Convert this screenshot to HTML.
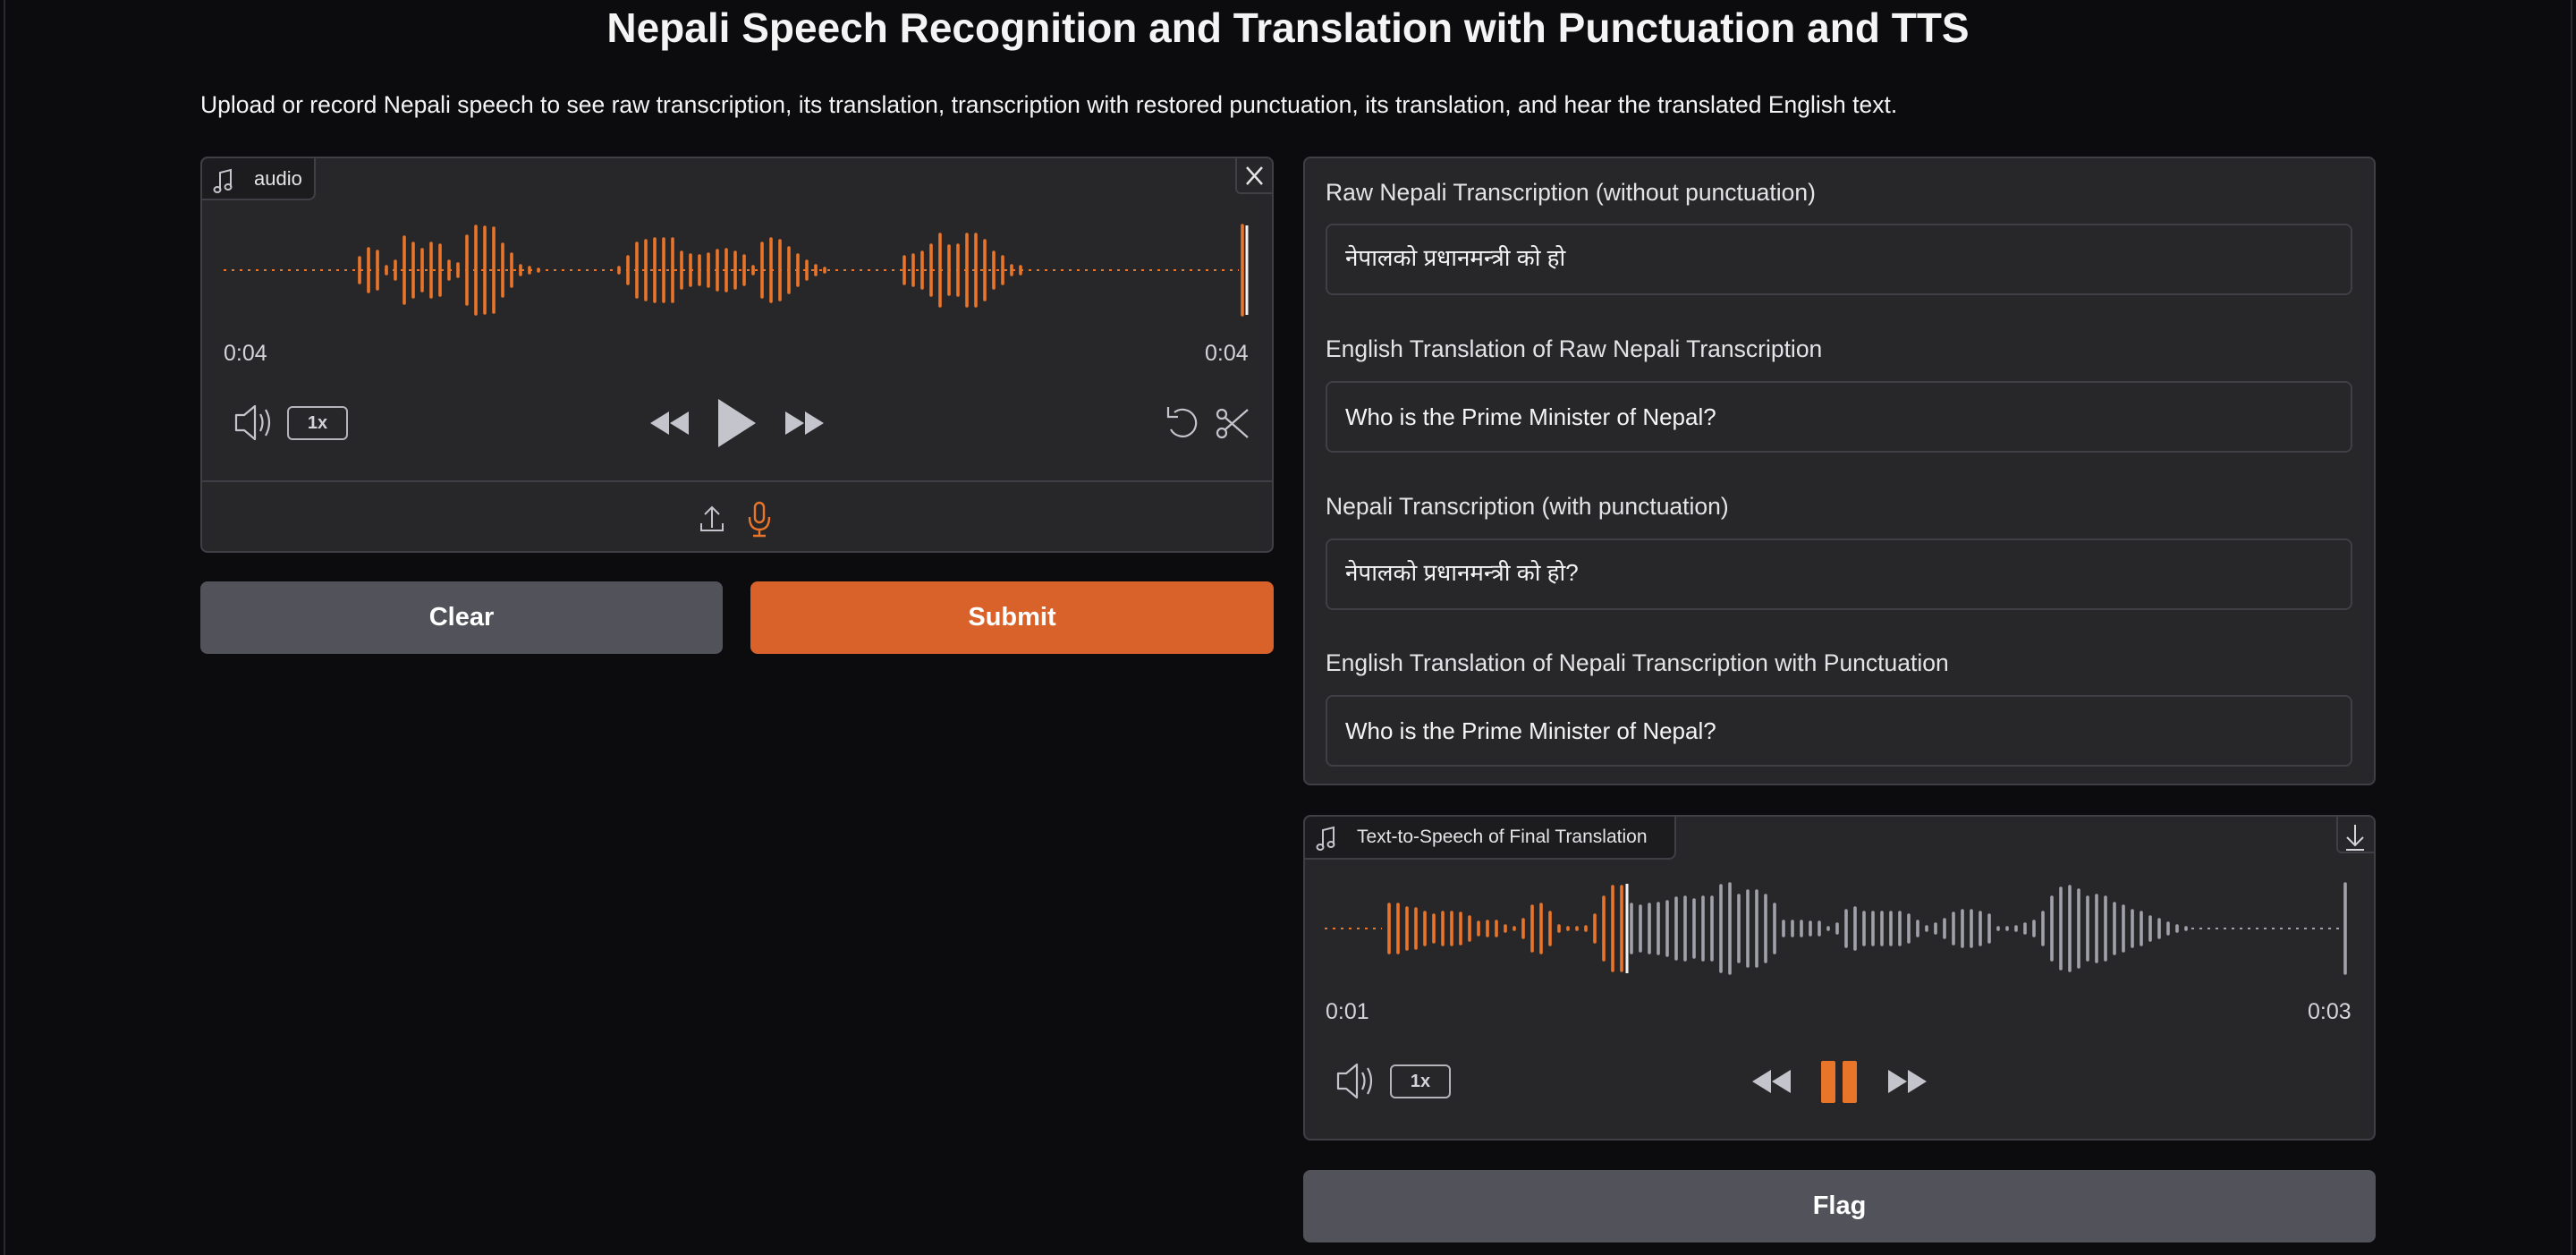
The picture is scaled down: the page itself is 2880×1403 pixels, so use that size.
<!DOCTYPE html>
<html><head><meta charset="utf-8"><style>
*{box-sizing:border-box;margin:0;padding:0}
html,body{width:2880px;height:1403px;overflow:hidden;background:#0c0c0f;font-family:"Liberation Sans","Noto Sans Devanagari","Lohit Devanagari","DejaVu Sans",sans-serif;color:#e4e4e7}
.a{position:absolute}
.title{left:0;width:2880px;top:4px;text-align:center;font-size:46px;font-weight:bold;color:#f4f4f5}
.desc{left:224px;top:102px;font-size:26.5px;color:#f4f4f5;white-space:nowrap}
.panel{background:#27272a;border:2px solid #3f3f46;border-radius:8px}
.tab{background:#1c1c1f;border-right:2px solid #3f3f46;border-bottom:2px solid #3f3f46;border-radius:8px 0 8px 0;font-size:22px;color:#e4e4e7;display:flex;align-items:center;padding-left:58px}
.btn{border-radius:8px;font-size:29px;font-weight:bold;color:#fff;display:flex;align-items:center;justify-content:center}
.lbl{left:1482px;font-size:26.5px;color:#e4e4e7}
.tb{left:1482px;width:1148px;height:80px;border:2px solid #3f3f46;border-radius:8px;background:#27272a;font-size:26px;color:#f4f4f5;padding-left:20px;display:flex;align-items:center}
.time{font-size:25px;color:#d4d4d8}
.sp{border:2px solid #b4b4bb;border-radius:6px;font-size:20px;color:#d4d4d8;display:flex;align-items:center;justify-content:center;font-weight:bold}
</style></head><body>
<div class="a" style="left:4px;top:0;width:2px;height:1403px;background:#2a2a2e"></div>
<div class="a" style="left:2874px;top:0;width:2px;height:1403px;background:#2a2a2e"></div>
<div class="a title">Nepali Speech Recognition and Translation with Punctuation and TTS</div>
<div class="a desc">Upload or record Nepali speech to see raw transcription, its translation, transcription with restored punctuation, its translation, and hear the translated English text.</div>

<div class="a panel" style="left:224px;top:175px;width:1200px;height:443px"></div>
<div class="a tab" style="left:226px;top:177px;width:127px;height:47px">audio</div>
<div class="a" style="left:1381px;top:177px;width:41px;height:40px;border-left:2px solid #3f3f46;border-bottom:2px solid #3f3f46;border-radius:0 6px 0 6px"></div>
<div class="a" style="left:226px;top:537px;width:1196px;height:2px;background:#3f3f46"></div>
<div class="a time" style="left:250px;top:381px">0:04</div>
<div class="a time" style="left:1347px;top:381px">0:04</div>
<div class="a sp" style="left:321px;top:454px;width:68px;height:38px">1x</div>

<div class="a btn" style="left:224px;top:650px;width:584px;height:81px;background:#52525b">Clear</div>
<div class="a btn" style="left:839px;top:650px;width:585px;height:81px;background:#d9622b">Submit</div>

<div class="a panel" style="left:1457px;top:175px;width:1199px;height:703px"></div>
<div class="a lbl" style="top:200px">Raw Nepali Transcription (without punctuation)</div>
<div class="a tb" style="top:250px">नेपालको प्रधानमन्त्री को हो</div>
<div class="a lbl" style="top:375px">English Translation of Raw Nepali Transcription</div>
<div class="a tb" style="top:426px">Who is the Prime Minister of Nepal?</div>
<div class="a lbl" style="top:551px">Nepali Transcription (with punctuation)</div>
<div class="a tb" style="top:602px">नेपालको प्रधानमन्त्री को हो?</div>
<div class="a lbl" style="top:726px">English Translation of Nepali Transcription with Punctuation</div>
<div class="a tb" style="top:777px">Who is the Prime Minister of Nepal?</div>

<div class="a panel" style="left:1457px;top:911px;width:1199px;height:364px"></div>
<div class="a tab" style="left:1459px;top:913px;width:415px;height:48px;font-size:21px">Text-to-Speech of Final Translation</div>
<div class="a" style="left:2612px;top:913px;width:42px;height:41px;border-left:2px solid #3f3f46;border-bottom:2px solid #3f3f46;border-radius:0 6px 0 6px"></div>
<div class="a time" style="left:1482px;top:1117px">0:01</div>
<div class="a time" style="left:2580px;top:1117px">0:03</div>
<div class="a sp" style="left:1554px;top:1190px;width:68px;height:38px">1x</div>

<div class="a btn" style="left:1457px;top:1308px;width:1199px;height:81px;background:#52525b">Flag</div>

<svg class="a" style="left:0;top:0" width="2880" height="1403" viewBox="0 0 2880 1403" fill="none">
<line x1="250" y1="302" x2="1385" y2="302" stroke="#e8752a" stroke-width="2" stroke-dasharray="3 6"/>
<path stroke="#e8752a" stroke-width="3.6" stroke-linecap="round" d="M402 288V316M412 278V326M422 281V323M432 298V306M442 292V312M452 265V339M462 272V332M472 279V325M482 272V332M492 274V330M502 292V312M512 295V309M522 264V340M532 253V351M542 254V350M552 255V349M562 273V331M572 284V320M582 297V307M592 299V305M602 301V303
M692 299V305M702 287V317M712 272V332M722 269V335M732 267V337M742 267V337M752 267V337M762 282V322M772 285V319M782 286V318M792 284V320M802 280V324M812 279V325M822 282V322M832 286V318M842 298V306M852 272V332M862 267V337M872 269V335M882 277V327M892 285V319M902 292V312M912 297V307M922 300V304
M1011 287V317M1021 285V319M1031 282V322M1041 274V330M1051 262V342M1061 275V329M1071 274V330M1081 262V342M1091 262V342M1101 269V335M1111 282V322M1121 287V317M1131 297V307M1141 298V306M1389 252V352"/>
<path stroke="#f4f4f5" stroke-width="3" d="M1394 252V352"/>
<line x1="1481" y1="1038" x2="1545" y2="1038" stroke="#e8752a" stroke-width="2" stroke-dasharray="3 6"/>
<line x1="2450" y1="1038" x2="2615" y2="1038" stroke="#a1a1aa" stroke-width="2" stroke-dasharray="3 6"/>
<path stroke="#e8752a" stroke-width="3.6" stroke-linecap="round" d="M1553 1011V1065M1563 1011V1065M1573 1015V1061M1583 1016V1060M1593 1020V1056M1603 1023V1053M1613 1020V1056M1623 1020V1056M1633 1021V1055M1643 1025V1051M1653 1031V1045M1663 1030V1046M1673 1030V1046M1683 1035V1041M1693 1037V1039M1703 1028V1048M1713 1013V1063M1723 1011V1065M1733 1020V1056M1743 1035V1041M1753 1037V1039M1763 1037V1039M1773 1036V1040M1783 1023V1053M1793 1003V1073M1803 991V1085M1813 991V1085"/>
<path stroke="#f4f4f5" stroke-width="3" d="M1819 988V1088"/>
<path stroke="#a1a1aa" stroke-width="3.6" stroke-linecap="round" d="M1824 1011V1065M1834 1013V1063M1844 1011V1065M1854 1010V1066M1864 1008V1068M1874 1004V1072M1884 1003V1073M1894 1006V1070M1904 1003V1073M1914 1003V1073M1924 990V1086M1934 988V1088M1944 1001V1075M1954 996V1080M1964 996V1080M1974 1001V1075M1984 1011V1065M1994 1030V1046M2004 1030V1046M2014 1030V1046M2024 1031V1045M2034 1031V1045M2044 1037V1039M2054 1033V1043M2064 1018V1058M2074 1015V1061M2084 1020V1056M2094 1020V1056M2104 1020V1056M2114 1020V1056M2124 1020V1056M2134 1023V1053M2144 1030V1046M2154 1036V1040M2164 1033V1043M2174 1028V1048M2184 1021V1055M2194 1018V1058M2204 1018V1058M2214 1020V1056M2224 1023V1053M2234 1037V1039M2244 1037V1039M2254 1036V1040M2264 1033V1043M2274 1030V1046M2284 1020V1056M2294 1003V1073M2304 993V1083M2314 991V1085M2324 995V1081M2334 1003V1073M2344 1001V1075M2354 1003V1073M2364 1010V1066M2374 1013V1063M2384 1018V1058M2394 1020V1056M2404 1025V1051M2414 1028V1048M2424 1032V1044M2434 1035V1041M2444 1037V1039M2622 988V1088"/>

<g stroke="#c4c4cc" stroke-width="2">
<path d="M246 212V193L258 190V209"/><ellipse cx="243" cy="212" rx="3.5" ry="3"/><ellipse cx="255" cy="209" rx="3.5" ry="3"/>
<path d="M1479 947V928L1491 925V944"/><ellipse cx="1476" cy="947" rx="3.5" ry="3"/><ellipse cx="1488" cy="944" rx="3.5" ry="3"/>
</g>
<path d="M1394 187L1411 206M1411 187L1394 206" stroke="#e4e4e7" stroke-width="2.5"/>
<path d="M2633 922V944M2624 936L2633 945L2642 936M2623 950H2643" stroke="#d4d4d8" stroke-width="2"/>

<g stroke="#c4c4cc" stroke-width="2.2" stroke-linejoin="round">
<path d="M264 464H273L285 454V491L273 481H264Z"/><path d="M291 463Q296 472 291 482M297 458Q305 472 297 487"/>
<path d="M1496 1200H1505L1517 1190V1227L1505 1217H1496Z"/><path d="M1523 1199Q1528 1208 1523 1218M1529 1194Q1537 1208 1529 1223"/>
</g>
<g fill="#c4c4cc">
<path d="M748 460L727 473L748 486Z"/><path d="M770 460L749 473L770 486Z"/>
<path d="M803 446L845 473L803 500Z"/>
<path d="M878 460L899 473L878 486Z"/><path d="M900 460L921 473L900 486Z"/>
<path d="M1980 1196L1959 1209L1980 1222Z"/><path d="M2002 1196L1981 1209L2002 1222Z"/>
<path d="M2111 1196L2132 1209L2111 1222Z"/><path d="M2133 1196L2154 1209L2133 1222Z"/>
</g>
<rect x="2036" y="1186" width="16" height="47" rx="2" fill="#e8752a"/>
<rect x="2060" y="1186" width="16" height="47" rx="2" fill="#e8752a"/>
<g stroke="#c4c4cc" stroke-width="2.2">
<path d="M1313 461A15 15 0 1 1 1309 480"/><path d="M1306 455V466H1317"/>
<circle cx="1366" cy="484" r="5"/><circle cx="1366" cy="463" r="5"/><path d="M1370 467L1395 489M1370 480L1395 458"/>
</g>
<path d="M796 567V590M788 575L796 567L804 575M784 585V593H808V585" stroke="#c4c4cc" stroke-width="2"/>
<g stroke="#e8752a" stroke-width="2.4"><rect x="844" y="562" width="10" height="22" rx="5"/><path d="M838 578Q838 592 849 592Q860 592 860 578M849 592V598M842 599H856"/></g>
</svg>
</body></html>
